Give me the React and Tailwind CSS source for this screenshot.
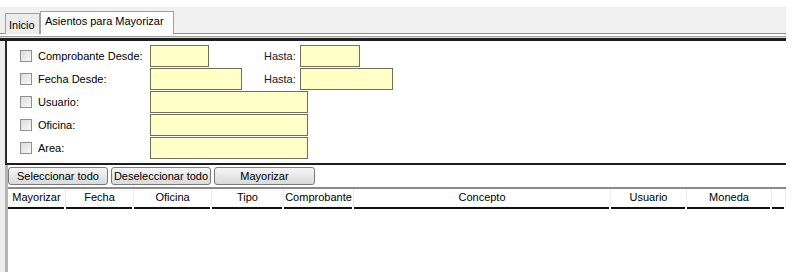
const filtros = [
  { label: "Comprobante Desde:", w: "w-[59px]", hasta: "w-[60px]" },
  { label: "Fecha Desde:", w: "w-[92px]", hasta: "w-[93px]" },
  { label: "Usuario:", w: "w-[158px]" },
  { label: "Oficina:", w: "w-[158px]" },
  { label: "Area:", w: "w-[158px]" },
];

const columnas = [
  { label: "Mayorizar", w: "w-[58px]" },
  { label: "Fecha", w: "w-[68px]" },
  { label: "Oficina", w: "w-[78px]" },
  { label: "Tipo", w: "w-[72px]" },
  { label: "Comprobante", w: "w-[70px]" },
  { label: "Concepto", w: "w-[257px]" },
  { label: "Usuario", w: "w-[76px]" },
  { label: "Moneda", w: "w-[85px]" },
  { label: "", w: "flex-1" },
];

const Campo = ({ w }) => (
  <div className={`${w} h-[22px] bg-[#ffffc8] border border-[#6f6f5a]`} />
);

const Boton = ({ children, w }) => (
  <button
    className={`${w} h-[18px] rounded-[3px] border border-[#7a7a7a] bg-gradient-to-b from-[#f6f6f6] to-[#dadada] text-[11px] leading-[16px] text-black whitespace-nowrap`}
  >
    {children}
  </button>
);

export default function App() {
  return (
    <div
      className="w-[810px] h-[272px] bg-white overflow-hidden text-[11px] text-black whitespace-nowrap"
      style={{ fontFamily: '"Liberation Sans", Arial, sans-serif' }}
    >
      {/* barra de pestañas */}
      <div className="mt-[7px] w-[786px] h-[27px] bg-[#f0f0f0] border-b border-[#8c8c8c] flex items-end pl-[5px]">
        <div className="h-[21px] w-[35px] border border-b-0 border-[#a0a0a0] bg-[#ececec] pl-[3px] pt-[4px] leading-[14px] mb-[-1px]">
          Inicio
        </div>
        <div className="h-[23px] w-[134px] border border-b-0 border-[#a0a0a0] bg-white pl-[4px] pt-[2px] leading-[14px] mb-[-1px] relative z-10">
          Asientos para Mayorizar
        </div>
      </div>

      <div className="w-[786px] mt-[2px] border-t border-[#a0a0a0]" />
      <div className="w-[786px] border-t border-[#e0e0e0]" />
      <div className="w-[786px] border-t-[3px] border-[#1e1e1e]" />

      <div className="w-[786px] flex">
        <div className="w-[5px] bg-[#eeeeee]" />
        <div className="flex-1 flex flex-col">
          {/* filtros */}
          <div className="border-l-2 border-[#2a2a2a] border-b-2 border-b-[#1e1e1e] pt-[4px] pb-[4px] flex flex-col gap-[1px]">
            {filtros.map((f) => (
              <div key={f.label} className="flex items-center h-[22px]">
                <div className="ml-[13px] w-[12px] h-[12px] border border-[#8e8f8f] bg-gradient-to-br from-[#dcdcdc] to-[#f8f8f8]" />
                <div className="ml-[6px] w-[112px]">{f.label}</div>
                {f.hasta ? (
                  <>
                    <div className="w-[114px]">
                      <Campo w={f.w} />
                    </div>
                    <div className="w-[36px] text-[#1a1a1a]">Hasta:</div>
                    <Campo w={f.hasta} />
                  </>
                ) : (
                  <Campo w={f.w} />
                )}
              </div>
            ))}
          </div>

          <div className="border-l-[3px] border-[#b4b4b4] flex flex-col">
            {/* botones */}
            <div className="flex gap-[3px] pt-[2px] pb-[2px]">
              <Boton w="w-[100px]">Seleccionar todo</Boton>
              <Boton w="w-[100px]">Deseleccionar todo</Boton>
              <Boton w="w-[101px]">Mayorizar</Boton>
            </div>

            {/* cabecera de la tabla */}
            <div className="border-t-2 border-[#8a8a8a] flex h-[22px]">
              {columnas.map((c, i) => (
                <div key={i} className={`${c.w} flex flex-col`}>
                  <div className="flex-1 flex items-center justify-center border-r border-[#ececec] leading-none pb-[2px]">
                    {c.label}
                  </div>
                  <div className="h-[2px] bg-[#111111] mr-[2px]" />
                </div>
              ))}
            </div>
            <div className="h-[70px]" />
          </div>
        </div>
      </div>
    </div>
  );
}
